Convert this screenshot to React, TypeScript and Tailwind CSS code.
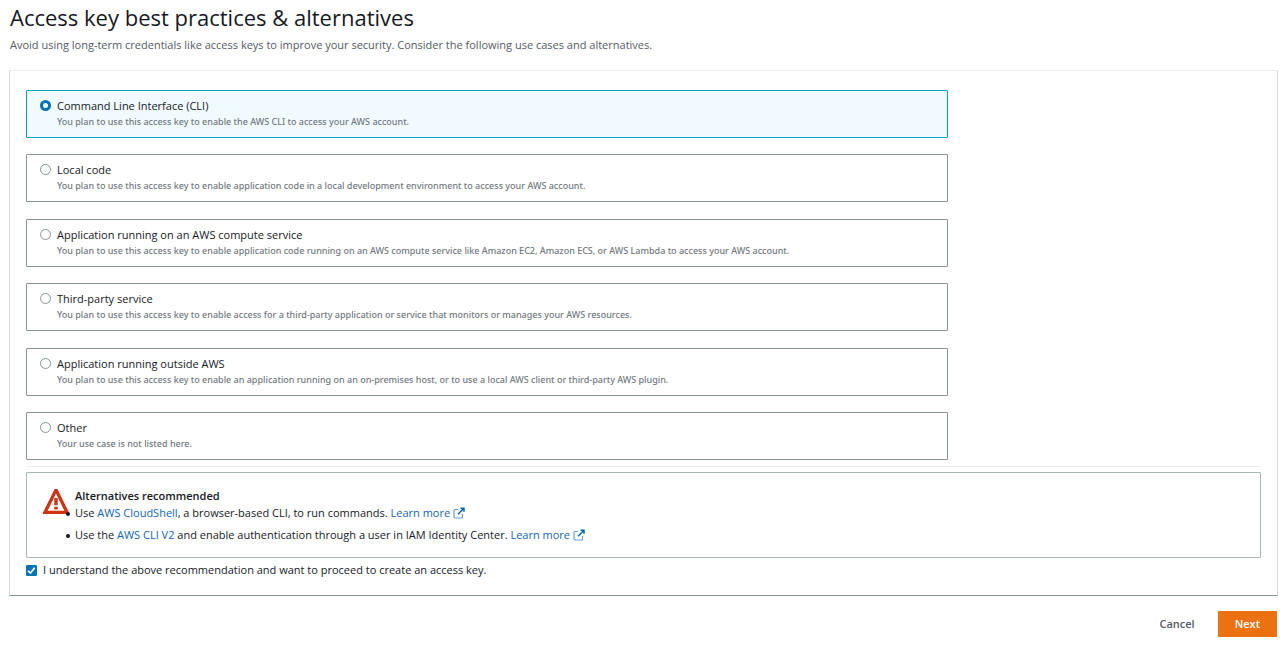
import { useState } from 'react'

const useCases = [
  {
    id: 'cli',
    title: 'Command Line Interface (CLI)',
    description: 'You plan to use this access key to enable the AWS CLI to access your AWS account.',
  },
  {
    id: 'local',
    title: 'Local code',
    description:
      'You plan to use this access key to enable application code in a local development environment to access your AWS account.',
  },
  {
    id: 'compute',
    title: 'Application running on an AWS compute service',
    description:
      'You plan to use this access key to enable application code running on an AWS compute service like Amazon EC2, Amazon ECS, or AWS Lambda to access your AWS account.',
  },
  {
    id: 'third-party',
    title: 'Third-party service',
    description:
      'You plan to use this access key to enable access for a third-party application or service that monitors or manages your AWS resources.',
  },
  {
    id: 'outside',
    title: 'Application running outside AWS',
    description:
      'You plan to use this access key to enable an application running on an on-premises host, or to use a local AWS client or third-party AWS plugin.',
  },
  { id: 'other', title: 'Other', description: 'Your use case is not listed here.' },
]

const bulletItem =
  "before:mr-[5px] before:-ml-[9px] before:inline-block before:h-1 before:w-1 before:rounded-full before:bg-[#16191f] before:align-[1px] before:content-['']"

function WarningIcon() {
  return (
    <svg className="h-[26px] w-[26px] shrink-0" viewBox="0 0 26 26" aria-hidden="true">
      <path
        fill="#d13212"
        fillRule="evenodd"
        d="M11.6 1 H14.4 L26 24.6 V26 H0 V24.6 Z M13 5.6 L4.6 22.8 H21.4 Z"
      />
      <path fill="#d13212" d="M11.3 10 H14.7 V17.2 H11.3 Z M11.3 18.8 H14.7 V21.4 H11.3 Z" />
    </svg>
  )
}

function ExternalIcon() {
  return (
    <svg className="inline-block h-3 w-3 align-[-2px]" viewBox="0 0 12 12" fill="none" aria-hidden="true">
      <path d="M5 2.5 H2 Q1 2.5 1 3.5 V10 Q1 11 2 11 H8.5 Q9.5 11 9.5 10 V7" stroke="#5b9bd8" strokeWidth="1.1" />
      <path d="M7.5 1.2 H11 V4.7 M11 1.2 L5 7.2" stroke="#0066b8" strokeWidth="1.5" />
    </svg>
  )
}

function LearnMore() {
  return (
    <a href="#learn-more" className="text-[#1166bb]">
      Learn more <ExternalIcon />
    </a>
  )
}

export default function App() {
  const [selected, setSelected] = useState('cli')
  const [understood, setUnderstood] = useState(true)

  return (
    <main className="bg-white pt-[3px] pr-2 pb-4 pl-[9px] font-['Open_Sans','Noto_Sans',sans-serif] text-[11px] leading-4 text-[#16191f]">
      <header className="pl-px">
        <h1 className="text-[22px] leading-7">Access key best practices &amp; alternatives</h1>
        <p className="mt-1.5 text-[#545b64]">
          Avoid using long-term credentials like access keys to improve your security. Consider the following use cases
          and alternatives.
        </p>
      </header>

      <section className="mt-[17px] border border-t-[#eaeded] border-r-[#d5dbdb] border-b-[#879596] border-l-[#d5dbdb] px-4 pt-[19px] pb-[17px]">
        <div
          role="radiogroup"
          aria-label="Use case"
          className="flex min-h-[370px] w-3/4 flex-col justify-between pr-1"
        >
          {useCases.map((item) => (
            <label
              key={item.id}
              className="flex gap-1.5 rounded-[1px] border border-[#879596] px-[13px] pt-[7px] pb-2 has-checked:border-[#00a1c9] has-checked:bg-[#f1faff]"
            >
              <input
                type="radio"
                name="use-case"
                value={item.id}
                checked={selected === item.id}
                onChange={() => setSelected(item.id)}
                className="mt-0.5 h-[11px] w-[11px] shrink-0 appearance-none rounded-full border border-[#879596] bg-white checked:border-[3px] checked:border-[#0073bb]"
              />
              <span className="block">
                <span className="block">{item.title}</span>
                <span className="block font-['Noto_Sans','Open_Sans',sans-serif] text-[9px] leading-[15px] font-medium text-[#717980]">
                  {item.description}
                </span>
              </span>
            </label>
          ))}
        </div>

        <hr className="mt-1.5 border-[#eaeded]" />

        <div className="mt-[5px] flex gap-1.5 rounded-[1px] border border-[#aab7b8] px-4 pt-[15px] pb-3.5">
          <WarningIcon />
          <div>
            <h2 className="font-semibold">Alternatives recommended</h2>
            <ul className="mt-px flex flex-col gap-1.5">
              <li className={bulletItem}>
                Use{' '}
                <a href="#cloudshell" className="text-[#1166bb]">
                  AWS CloudShell
                </a>
                , a browser-based CLI, to run commands. <LearnMore />
              </li>
              <li className={bulletItem}>
                Use the{' '}
                <a href="#cli-v2" className="text-[#1166bb]">
                  AWS CLI V2
                </a>{' '}
                and enable authentication through a user in IAM Identity Center. <LearnMore />
              </li>
            </ul>
          </div>
        </div>

        <label className="mt-1 flex items-center gap-1.5">
          <span className="grid h-[11px] w-[11px] shrink-0">
            <input
              type="checkbox"
              checked={understood}
              onChange={(event) => setUnderstood(event.target.checked)}
              className="peer col-start-1 row-start-1 h-[11px] w-[11px] appearance-none rounded-[1px] border border-[#879596] checked:border-[#0073bb] checked:bg-[#0073bb]"
            />
            <svg
              className="pointer-events-none invisible col-start-1 row-start-1 h-[11px] w-[11px] peer-checked:visible"
              viewBox="0 0 11 11"
              fill="none"
              aria-hidden="true"
            >
              <path d="M2 5.8 L4.5 8 L8.7 2.7" stroke="white" strokeWidth="1.7" />
            </svg>
          </span>
          <span>I understand the above recommendation and want to proceed to create an access key.</span>
        </label>
      </section>

      <footer className="mt-[15px] flex justify-end gap-1.5 pr-px font-semibold">
        <button type="button" className="h-[26px] px-[17px] text-[#545b64]">
          Cancel
        </button>
        <button type="button" className="h-[26px] rounded-[1px] bg-[#ec7211] px-[17px] text-white">
          Next
        </button>
      </footer>
    </main>
  )
}
